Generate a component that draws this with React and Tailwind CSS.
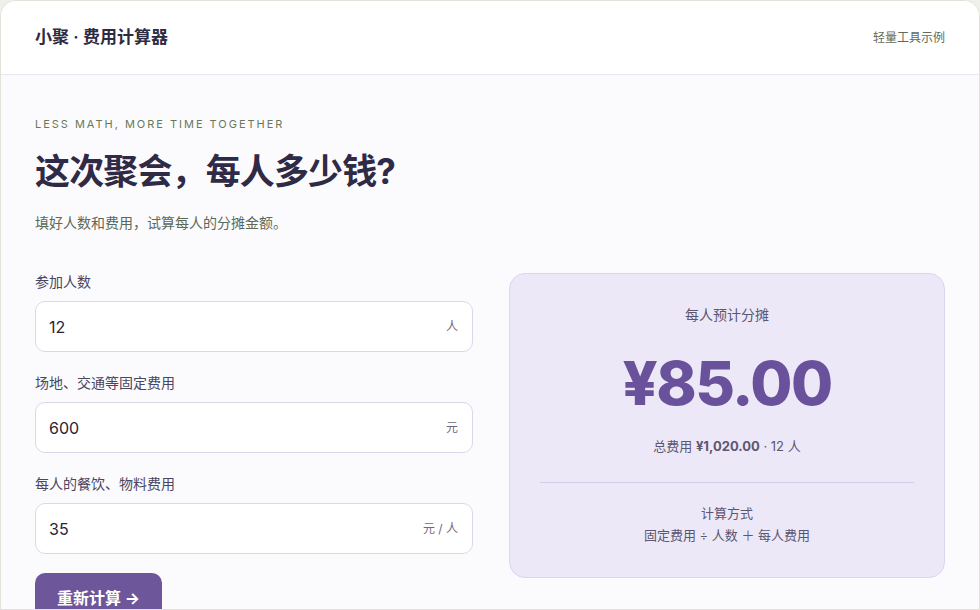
import { useState } from 'react';

const fields = [
  { key: 'people', label: '参加人数', unit: '人' },
  { key: 'fixed', label: '场地、交通等固定费用', unit: '元' },
  { key: 'each', label: '每人的餐饮、物料费用', unit: '元 / 人' },
];

export default function App() {
  const [vals, setVals] = useState({ people: '12', fixed: '600', each: '35' });

  const n = Number(vals.people) || 0;
  const total = (Number(vals.fixed) || 0) + n * (Number(vals.each) || 0);
  const per = n > 0 ? total / n : 0;
  const fmt = (v) => v.toLocaleString('en-US', { minimumFractionDigits: 2, maximumFractionDigits: 2 });

  return (
    <div className="min-h-screen bg-[#f0f0ea] font-['Inter','Noto_Sans_CJK_SC',sans-serif] antialiased">
      <div className="w-[980px] h-[610px] overflow-hidden bg-[#fbfbfe] border border-[#e2e2da] rounded-t-2xl">
        {/* HEADER */}
        <header className="h-[74px] bg-white border-b border-[#e9e6f2] px-[34px] flex items-center justify-between">
          <h1 className="text-[17px] font-semibold text-[#2e2a40]">小聚 · 费用计算器</h1>
          <span className="text-[12px] text-[#5f6b5c]">轻量工具示例</span>
        </header>

        <main className="px-[34px] pt-[41px]">
          <p className="text-[11px] uppercase tracking-[0.18em] text-[#6b7858] leading-4">Less math, more time together</p>
          <h2 className="mt-[15px] text-[35px] font-bold text-[#2f2a45] leading-[48px] tracking-tight">这次聚会，每人多少钱?</h2>
          <p className="mt-[18px] text-[14px] text-[#5b6958] leading-5">填好人数和费用，试算每人的分摊金额。</p>

          <div className="mt-[39px] grid grid-cols-[438px_436px] gap-[36px]">
            {/* INPUTS */}
            <div className="flex flex-col">
              {fields.map((f, i) => (
                <label key={f.key} className={`flex flex-col ${i > 0 ? 'mt-[21px]' : ''}`}>
                  <span className="text-[14px] text-[#4a4560] leading-5">{f.label}</span>
                  <div className="mt-[9px] h-[51px] bg-white border border-[#dcd7e8] rounded-[10px] flex items-center pl-[13px] pr-[14px]">
                    <input
                      value={vals[f.key]}
                      onChange={(e) => setVals({ ...vals, [f.key]: e.target.value })}
                      className="flex-1 min-w-0 bg-transparent outline-none text-[16px] text-[#27243a]"
                    />
                    <span className="text-[12px] text-[#6e6a80]">{f.unit}</span>
                  </div>
                </label>
              ))}
              <button className="mt-[19px] self-start h-[50px] w-[127px] rounded-[10px] bg-[#6e569a] text-white text-[16px] font-bold">
                重新计算 →
              </button>
            </div>

            {/* RESULT */}
            <div className="mt-[1px] h-[305px] bg-[#ede8f7] border border-[#ddd4ef] rounded-2xl px-[30px] pt-[31px] flex flex-col items-center">
              <p className="text-[14px] text-[#5c5670] leading-5">每人预计分摊</p>
              <p className="mt-[22px] text-[61px] font-extrabold text-[#6a519b] leading-[72px] tracking-tight">¥{fmt(per)}</p>
              <p className="mt-[17px] text-[13px] text-[#5c5670] leading-5">
                总费用 <span className="font-bold">¥{fmt(total)}</span> · {n} 人
              </p>
              <div className="mt-[26px] w-full border-t border-[#d6cdea]" />
              <p className="mt-[19px] text-[13px] text-[#5c5670] leading-[22px]">计算方式</p>
              <p className="text-[13px] text-[#5c5670] leading-[22px]">固定费用 ÷ 人数 ＋ 每人费用</p>
            </div>
          </div>
        </main>
      </div>
    </div>
  );
}
